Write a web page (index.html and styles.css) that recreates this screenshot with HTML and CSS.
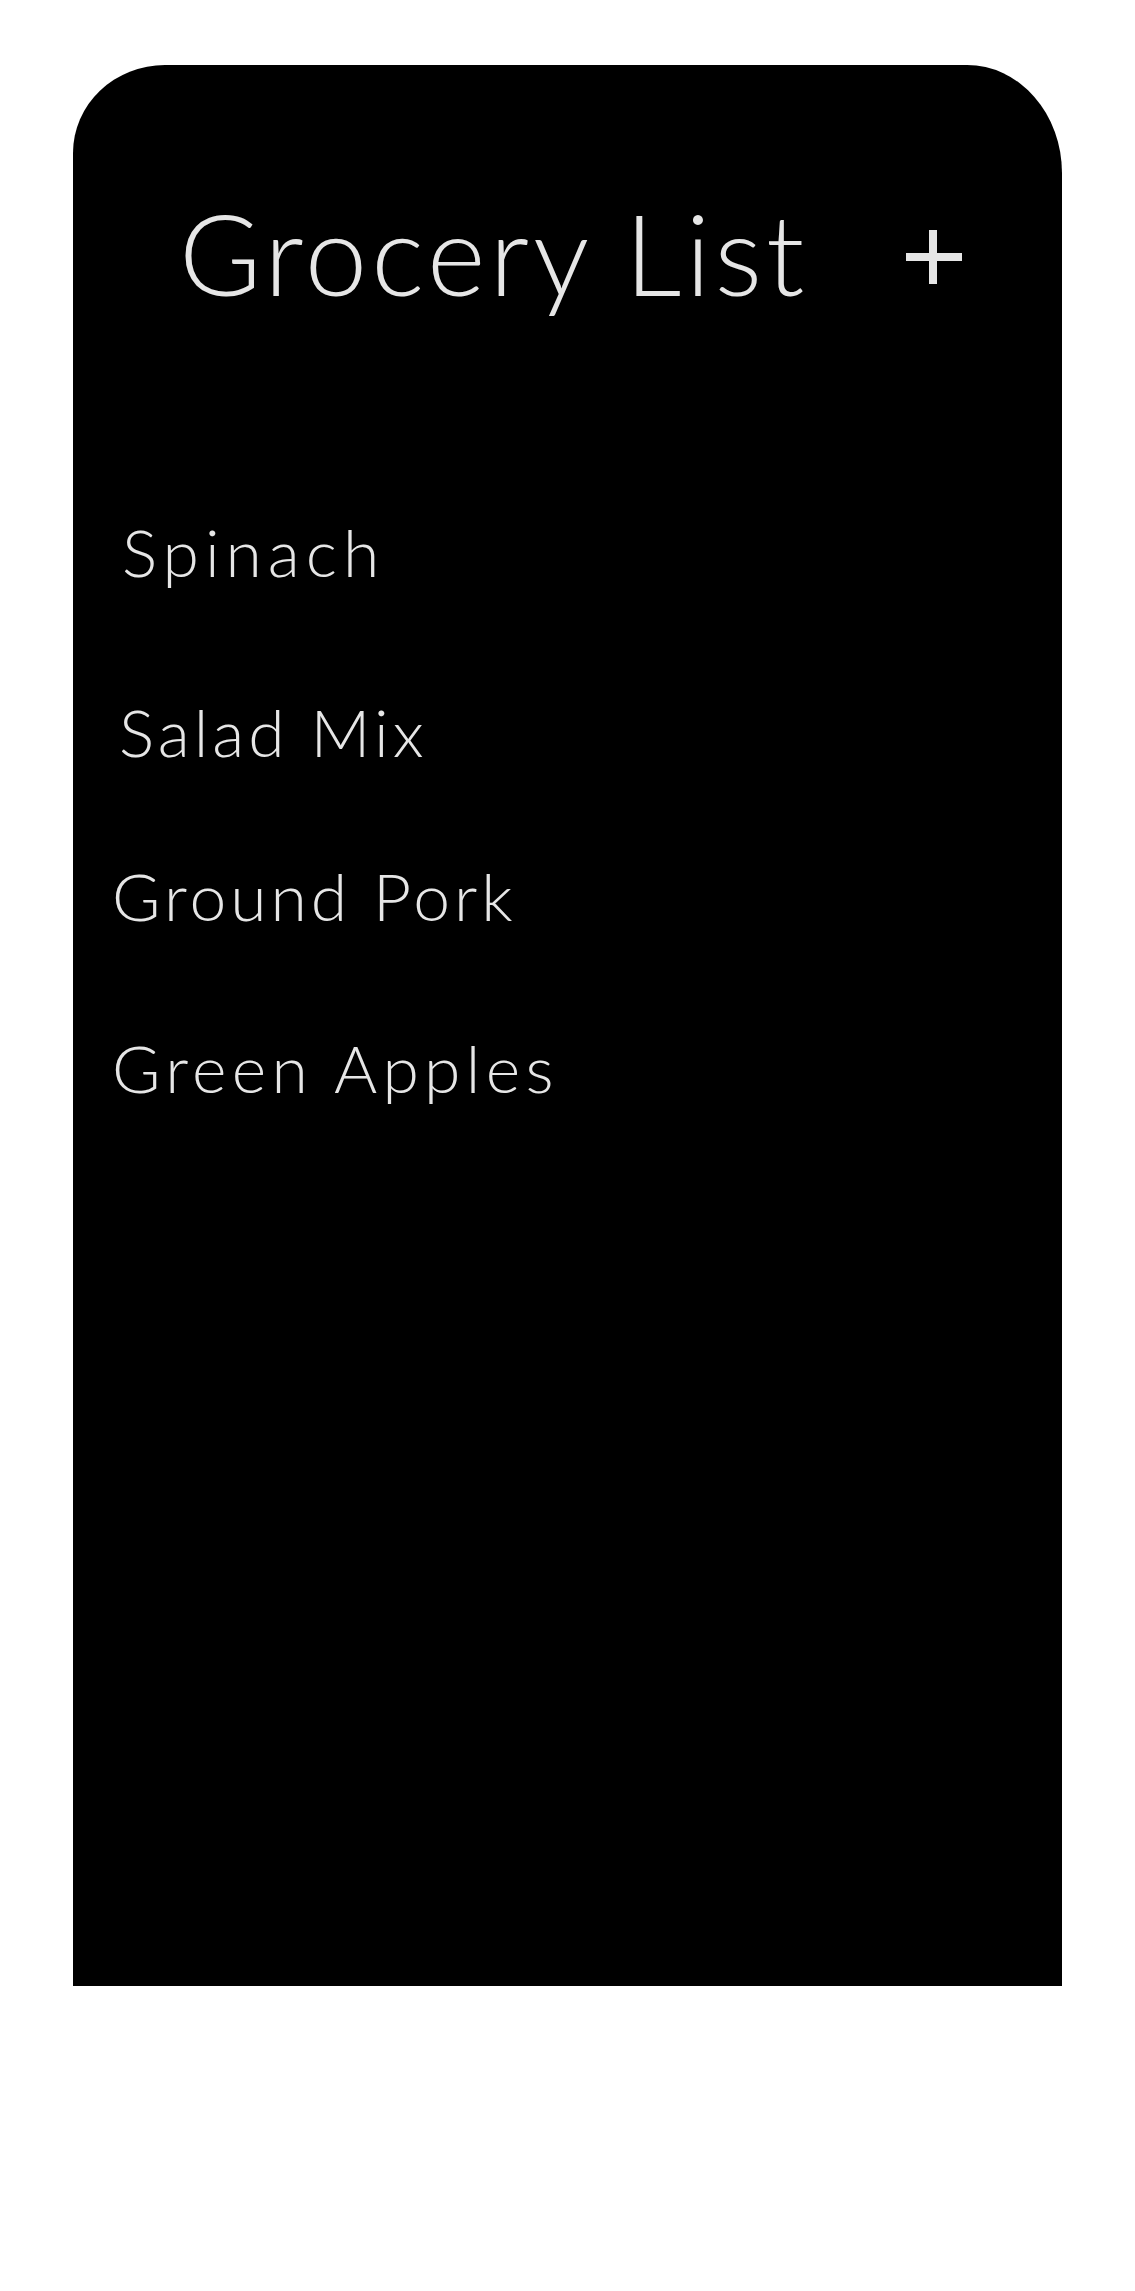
FILE: index.html
```html
<!DOCTYPE html>
<html lang="en">
<head>
<meta charset="utf-8">
<title>Grocery List</title>
<link rel="stylesheet" href="styles.css">
</head>
<body>
<main class="phone">
  <header class="header">
    <h1 class="title">Grocery List</h1>
    <button class="add" type="button" aria-label="Add item">
      <svg width="56" height="54" viewBox="0 0 56 54" aria-hidden="true">
        <rect x="23" y="0" width="8" height="54" fill="#e6e6e6"/>
        <rect x="0" y="23" width="56" height="8" fill="#e6e6e6"/>
      </svg>
    </button>
  </header>
  <ul class="list">
    <li class="item item--spinach">Spinach</li>
    <li class="item item--salad">Salad Mix</li>
    <li class="item item--pork">Ground Pork</li>
    <li class="item item--apples">Green Apples</li>
  </ul>
</main>
</body>
</html>
```
FILE: styles.css
```css
html, body {
  margin: 0;
  padding: 0;
  background: #ffffff;
}

body {
  font-family: "Lato", "Open Sans", "Liberation Sans", sans-serif;
  height: 2291px;
}

.phone {
  margin: 65px 0 0 73px;
  width: 989px;
  height: 1921px;
  background: #000000;
  border-radius: 92px 95px 0 0 / 88px 108px 0 0;
  color: #e6e6e6;
  box-sizing: border-box;
  padding-top: 132px;
}

.header {
  display: flex;
  justify-content: space-between;
  align-items: flex-start;
  padding: 0 100px 0 106px;
}

.title {
  margin: 0;
  font-size: 112px;
  line-height: 112px;
  font-weight: 300;
  letter-spacing: 4px;
}

.add {
  margin-top: 33px;
  padding: 0;
  border: 0;
  background: none;
  width: 56px;
  height: 54px;
  display: block;
}

.add svg {
  display: block;
}

.list {
  list-style: none;
  margin: 0;
  padding: 0 0 0 39px;
}

.item {
  font-size: 66px;
  line-height: 64px;
  font-weight: 300;
  letter-spacing: 4.5px;
}

.item--spinach { margin-top: 211px; padding-left: 10px; letter-spacing: 6px; }
.item--salad { margin-top: 116px; padding-left: 7px; letter-spacing: 4px; }
.item--pork { margin-top: 100px; letter-spacing: 4px; }
.item--apples { margin-top: 108px; letter-spacing: 5.3px; }
```
